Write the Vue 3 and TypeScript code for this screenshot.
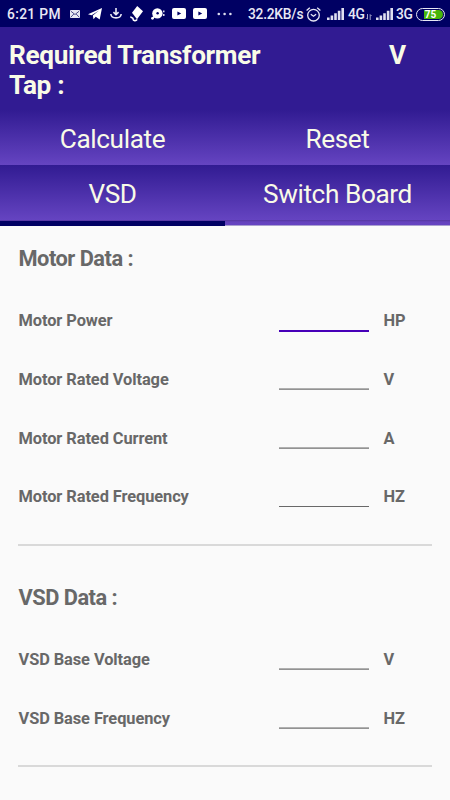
<script setup lang="ts">
interface Field {
  label: string
  unit: string
  line: 'focused' | 'soft' | 'crisp'
}
interface Section {
  title: string
  fields: Field[]
}

const sections: Section[] = [
  {
    title: 'Motor Data :',
    fields: [
      { label: 'Motor Power', unit: 'HP', line: 'focused' },
      { label: 'Motor Rated Voltage', unit: 'V', line: 'soft' },
      { label: 'Motor Rated Current', unit: 'A', line: 'soft' },
      { label: 'Motor Rated Frequency', unit: 'HZ', line: 'crisp' },
    ],
  },
  {
    title: 'VSD Data :',
    fields: [
      { label: 'VSD Base Voltage', unit: 'V', line: 'soft' },
      { label: 'VSD Base Frequency', unit: 'HZ', line: 'soft' },
    ],
  },
]
</script>

<template>
  <div class="screen">
    <div class="status">
      <span class="clock">6:21 PM</span>
      <svg class="mail" width="10" height="8" viewBox="0 0 10 8">
        <rect width="10" height="8" rx="1" fill="#e8e8f4" />
        <path d="M1 1.3l4 3.2 4-3.2M1 7l2.8-3M9 7L6.2 4" fill="none" stroke="#22226e" stroke-width=".8" />
      </svg>
      <svg class="plane" width="14" height="12" viewBox="0 0 14 12">
        <path d="M0 6.2L14 0l-2.3 11.5-4-2.7-2.2 2.5-.7-3.7L11 2.5 3.6 7.2z" fill="#fff" />
      </svg>
      <svg class="download" width="12" height="11" viewBox="0 0 12 11" fill="none" stroke="#e8e8f5" stroke-width="1.6">
        <path d="M6 0v6.5M3.4 4.1L6 6.7l2.6-2.6M.8 6c.6 5.2 9.8 5.2 10.4 0" />
      </svg>
      <svg class="kite" width="13" height="16" viewBox="0 0 13 16">
        <path d="M7.2 0L13 5.3 7 13.2 2 6.8z" fill="#fff" />
        <path d="M.7 10.5c.2 2 2.5.6 2.4 2.6-.1 1.7 3 2.2 4 .2" fill="none" stroke="#fff" stroke-width="1.6" />
      </svg>
      <svg class="disc" width="14" height="12" viewBox="0 0 14 12">
        <path d="M1.2 10.2l3-2.2" stroke="#fff" stroke-width="1.8" />
        <circle cx="6.4" cy="5.4" r="5.2" fill="#fff" />
        <circle cx="6.6" cy="5.2" r="1.2" fill="#000063" />
        <path d="M12.8 2.5v1.8M12.8 6v2" stroke="#fff" stroke-width="1.3" />
        <circle cx="1.5" cy="10.3" r="1.4" fill="#fff" />
      </svg>
      <svg v-for="n in 2" :key="n" class="video" width="14" height="11" viewBox="0 0 14 11">
        <rect width="14" height="11" rx="2" fill="#fff" />
        <path d="M5.4 3.4v4.2l3.8-2.1z" fill="#000063" />
      </svg>
      <svg class="dots" width="16" height="4" viewBox="0 0 16 4" fill="#dedef0">
        <circle cx="1.8" cy="2" r="1.3" /><circle cx="7.6" cy="2" r="1.3" /><circle cx="13.4" cy="2" r="1.3" />
      </svg>
      <span class="speed">32.2KB/s</span>
      <svg class="alarm" width="15" height="15" viewBox="0 0 15 15" fill="none" stroke="#e8e8f5" stroke-width="1.3">
        <circle cx="7.5" cy="8.2" r="5.8" />
        <path d="M.6 3.6L3.8.8M14.4 3.6L11.2.8M4.8 7.2l2.7 2 2.6-2" />
      </svg>
      <svg class="signal first" width="17" height="12" viewBox="0 0 17 12" fill="#e0e0f0">
        <path d="M0 9.6h2.6V12H0zM3.6 7.6h2.6V12H3.6zM7.2 5.2h2.6V12H7.2zM10.8 2.7h2.6V12h-2.6zM14.4 0H17v12h-2.6z" />
      </svg>
      <span class="network four">4G</span>
      <svg class="traffic" width="6" height="6" viewBox="0 0 6 6" fill="none" stroke="#b0b0d2" stroke-width=".9">
        <path d="M1.5 0v5.2M.2 3.8l1.3 1.4M4.2 6V.6M4.2.6l1.5 1.5" />
      </svg>
      <svg class="signal second" width="17" height="12" viewBox="0 0 17 12" fill="#e0e0f0">
        <path d="M0 9.6h2.6V12H0zM3.6 7.6h2.6V12H3.6zM7.2 5.2h2.6V12H7.2zM10.8 2.7h2.6V12h-2.6zM14.4 0H17v12h-2.6z" />
      </svg>
      <span class="network three">3G</span>
      <span class="battery"><span class="charge">75</span></span>
    </div>

    <header class="result">
      <h1>Required Transformer Tap :</h1>
      <span>V</span>
    </header>

    <div class="bar">
      <button type="button">Calculate</button>
      <button type="button">Reset</button>
    </div>
    <nav class="bar tabs">
      <button type="button" class="active">VSD</button>
      <button type="button">Switch Board</button>
    </nav>

    <main>
      <section v-for="s in sections" :key="s.title">
        <h2>{{ s.title }}</h2>
        <div v-for="f in s.fields" :key="f.label" class="field">
          <span class="label">{{ f.label }}</span>
          <span class="entry" :class="f.line"></span>
          <span class="unit">{{ f.unit }}</span>
        </div>
      </section>
    </main>
  </div>
</template>

<style>
body {
  margin: 0;
  background: #fafafa;
}
</style>

<style scoped>
.screen {
  width: 450px;
  height: 800px;
  overflow: hidden;
  background: #fafafa;
  font-family: Roboto, "Liberation Sans", sans-serif;
}
.status {
  display: flex;
  align-items: center;
  box-sizing: border-box;
  height: 27px;
  padding-left: 7px;
  background: #000063;
  color: #e8e8f5;
  font-size: 13.8px;
  font-weight: 500;
  white-space: nowrap;
}
.status > * {
  flex: none;
}
.clock {
  width: 63px;
  letter-spacing: 0.35px;
  padding-top: 1px;
}
.plane { margin-left: 8px; }
.download { margin-left: 8px; }
.kite { margin-left: 8px; }
.disc { margin-left: 8px; }
.video { margin-left: 7px; }
.dots { margin-left: 10px; }
.speed {
  width: 58px;
  margin-left: 15px;
  padding-top: 1px;
  letter-spacing: -0.25px;
}
.alarm { margin-top: 1px; }
.signal { margin-left: 6px; margin-top: 1px; }
.network {
  padding-top: 1px;
  letter-spacing: -0.4px;
}
.four { margin-left: 4px; width: 18px; }
.traffic { margin-top: 6px; }
.signal.second { margin-left: 4px; }
.three { margin-left: 3px; width: 20px; }
.battery {
  box-sizing: border-box;
  width: 29px;
  height: 13px;
  margin-top: 1px;
  padding: 1px;
  border: 1.5px solid #e8e8f5;
  border-radius: 7px;
}
.charge {
  display: block;
  height: 9px;
  border-radius: 5px;
  background: linear-gradient(90deg, #000063 25%, #47b50a 25%);
  color: #fff;
  font-size: 10px;
  font-weight: 700;
  line-height: 10px;
  text-align: center;
}
.result {
  display: flex;
  box-sizing: border-box;
  height: 83px;
  padding: 13px 0 0 9px;
  background: #311b92;
  color: #f9fbe7;
  font-size: 26.2px;
  font-weight: 700;
  letter-spacing: -0.35px;
  line-height: 30px;
}
h1 {
  width: 380px;
  margin: 0;
  padding-right: 110px;
  box-sizing: border-box;
  font: inherit;
}
.bar {
  display: grid;
  grid-template-columns: 1fr 1fr;
  height: 55px;
  background: linear-gradient(#311b92, #6544c1);
}
.bar button {
  margin: 0;
  padding: 2px 0 0;
  border: 0;
  background: none;
  color: #f9fbe7;
  font: 400 26.2px/30px Roboto, "Liberation Sans", sans-serif;
  letter-spacing: -0.4px;
}
.tabs {
  height: 61px;
  background: linear-gradient(#311b92, #6544c1 55px, #54369f 55px, #6442bd 57px, #6544c1 60px, #aaa0cf 60px);
}
.tabs button {
  padding: 1px 0 0;
  border-bottom: 5px solid transparent;
}
.tabs .active {
  border-color: #000063;
}
main {
  padding: 0 18px;
  color: #686868;
}
section {
  border-bottom: 2px solid #d9d9d9;
  height: 320px;
  box-sizing: border-box;
}
section + section {
  height: 221px;
  padding-top: 19px;
}
h2 {
  margin: 0;
  padding: 20px 0 0 0.5px;
  font-size: 21.8px;
  font-weight: 700;
  letter-spacing: -0.5px;
  line-height: 26px;
}
.field {
  display: grid;
  grid-template-columns: 261px 90px auto;
  align-items: start;
  height: 58.7px;
  font-size: 16.4px;
  font-weight: 700;
  letter-spacing: -0.08px;
  line-height: 20px;
}
h2 + .field {
  margin-top: 38.7px;
}
.label {
  padding: 0.7px 0 0 0.5px;
}
.unit {
  padding: 0.7px 0 0 14.5px;
}
.entry {
  height: 19px;
  border-bottom: 1px solid #686868;
}
.soft {
  height: 18.6px;
  border-bottom-color: #b0b0b0;
  box-shadow: 0 1px #929292;
}
.focused {
  border-bottom: 2px solid #4600b8;
}
</style>
